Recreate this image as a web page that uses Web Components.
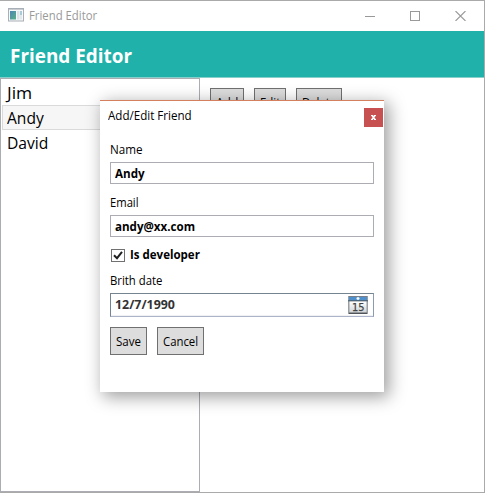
<!DOCTYPE html>
<html lang="en">
<head>
<meta charset="utf-8">
<title>Friend Editor</title>
<style>
html,body{margin:0;padding:0;width:485px;height:493px;overflow:hidden;background:#fff}
body{font:12px/16px "Open Sans","Noto Sans",sans-serif;color:#000}
</style>
</head>
<body>
<friend-app></friend-app>
<script>
function define(name, html, setup) {
  const t = document.createElement('template');
  t.innerHTML = html;
  customElements.define(name, class extends HTMLElement {
    connectedCallback() {
      if (this.shadowRoot) return;
      const root = this.attachShadow({mode: 'open'});
      root.append(t.content.cloneNode(true));
      if (setup) setup(this, root);
    }
  });
}

/* Text condensed or widened to a given advance width. */
define('fit-text', `<style>
:host{display:block;white-space:nowrap;flex:none}
span{display:inline-block;transform-origin:0 50%;vertical-align:top}
</style><span><slot></slot></span>`, (host, root) => {
  const w = +host.getAttribute('w');
  const span = root.querySelector('span');
  host.style.width = w + 'px';
  span.style.transform = 'scaleX(' + w / span.offsetWidth + ')';
});

define('window-titlebar', `<style>
:host{display:flex;align-items:center;height:30px;padding-left:8px;box-sizing:border-box;color:#999}
fit-text{margin-left:5px}
svg{display:block}
.app{margin-top:-2px}
.controls{margin-left:auto;margin-right:18px;margin-top:-1px;display:flex;gap:35px}
</style>
<svg class="app" width="16" height="14" viewBox="0 0 16 14"><defs><linearGradient id="g" x2="1" y2="1"><stop offset="0" stop-color="#4f86b5"/><stop offset="1" stop-color="#5bb086"/></linearGradient></defs>
<rect x=".5" y=".5" width="15" height="12.5" fill="#f7f8fa" stroke="#a9afb6"/><path d="M1 1.5h14" stroke="#c9cdd2"/><rect x="2" y="3" width="6" height="8.5" fill="url(#g)"/><rect x="9" y="3" width="2.5" height="8.5" fill="#dfe3e8"/><rect x="12" y="3" width="2" height="4" fill="#a8cbd8"/><rect x="12" y="7" width="2" height="4.5" fill="#e3e8ec"/></svg>
<fit-text w="68">Friend Editor</fit-text>
<div class="controls">
<svg width="10" height="10"><path d="M0 5.5h10" stroke="#999"/></svg>
<svg width="10" height="10"><rect x=".5" y=".5" width="9" height="9" fill="none" stroke="#999"/></svg>
<svg width="11" height="10"><path d="M.5 0l10 10M10.500 0l-10 10" stroke="#999" stroke-width="1.1"/></svg>
</div>`);

define('app-banner', `<style>
:host{display:block;height:47px;box-sizing:border-box;background:#20b2aa;border-bottom:1px solid #86cfca;padding:11px 0 0 10px;color:#fff;font-size:20px;font-weight:700;line-height:27px}
</style><fit-text w="122"><slot></slot></fit-text>`);

define('list-row', `<style>
:host{display:block;height:25px;box-sizing:border-box;border:1px solid transparent;padding:1px 0 0 4px;font-size:16px;line-height:22px}
:host([selected]){background:#f6f6f6;border-color:#dadada}
</style><slot></slot>`);

define('friend-list', `<style>
:host{display:block;width:200px;height:414px;box-sizing:border-box;border:1px solid #abadb3;padding:1px;flex:none}
</style><slot></slot>`);

define('ui-button', `<style>
:host{display:block;box-sizing:border-box;height:28px;background:#ddd;border:1px solid #707070;padding:6px 5px 0;flex:none}
</style><slot></slot>`);

define('text-field', `<style>
:host{display:flex;box-sizing:border-box;height:22px;border:1px solid #abadb3;padding:3px 4px 0;font-weight:700;background:#fff}
:host([date]){height:24px;padding-top:3px;padding-right:5px;color:#333;border-color:#748491 #8d9bae #abb4ca #748491;box-shadow:inset 0 -1px #f1f1f3}
</style><slot></slot>`);

define('calendar-icon', `<style>:host{display:block;margin-left:auto;margin-top:-1px}svg{display:block}text{font:10.500px "DejaVu Sans",sans-serif;fill:#444}</style>
<svg width="20" height="18" viewBox="0 0 20 18"><defs><linearGradient id="p" x2="0" y2="1"><stop offset="0" stop-color="#fff"/><stop offset="1" stop-color="#cfd4d7"/></linearGradient></defs>
<rect width="20" height="18" fill="#9a9ea2"/><rect x="1" y="0" width="18" height="1" fill="#78818a"/><rect x="1" y="1" width="18" height="4" fill="#4f8fcb"/><rect y="4.300" width="20" height="1" fill="#4c5964"/><rect x="1.500" y="5.500" width="17" height="11" fill="url(#p)"/><rect x="1" y="16.700" width="18" height="1.300" fill="#505357"/><path d="M10 1v3M8.500 2.500h3" stroke="#fff" stroke-width="1.300"/>
<text x="4" y="15.200" textLength="12.500" lengthAdjust="spacingAndGlyphs" stroke="#444" stroke-width=".25">15</text></svg>`);

define('check-box', `<style>
:host{display:flex;align-items:center;gap:5px;font-weight:700;padding-left:1px;height:16px}
svg{display:block;flex:none}
</style><svg width="14" height="13"><rect x=".5" y=".5" width="13" height="12" fill="#fff" stroke="#707070"/><path d="M3 6.200l3 3L11 2.800" fill="none" stroke="#212121" stroke-width="2"/></svg><slot></slot>`);

define('close-button', `<style>
:host{display:block;width:19px;height:19px;background:#c75050}
svg{display:block}
</style><svg width="19" height="19"><path d="M7 7.500h2.300M10 7.500h2M7 11.500h2M10 11.500h2" stroke="#fff"/><path d="M8 7.500l3 4M11 7.500l-3 4" stroke="#fff" stroke-width="1.500"/></svg>`);

define('friend-dialog', `<style>
:host{position:absolute;left:100px;top:99px;width:284px;height:292px;box-sizing:border-box;background:#fff;border-top:1px solid #d4805f;box-shadow:4px 4px 16px 1px rgba(0,0,0,.38)}
header{display:flex;justify-content:space-between;align-items:flex-start;padding:7px 1px 0 8px;height:40px;box-sizing:border-box}
main{padding:1px 10px 0;display:flex;flex-direction:column}
text-field{margin-top:4px}
.l2{margin-top:11px}
check-box{margin-top:10px}
.l3{margin-top:10px}
[date]{margin-top:4px}
.actions{display:flex;gap:10px;margin-top:10px}
</style>
<header><fit-text w="84">Add/Edit Friend</fit-text><close-button></close-button></header>
<main>
<fit-text w="33">Name</fit-text>
<text-field><fit-text w="30">Andy</fit-text></text-field>
<fit-text class="l2" w="29">Email</fit-text>
<text-field><fit-text w="80">andy@xx.com</fit-text></text-field>
<check-box><fit-text w="70">Is developer</fit-text></check-box>
<fit-text class="l3" w="52">Brith date</fit-text>
<text-field date><fit-text w="60">12/7/1990</fit-text><calendar-icon></calendar-icon></text-field>
<div class="actions"><ui-button><fit-text w="25">Save</fit-text></ui-button><ui-button><fit-text w="35">Cancel</fit-text></ui-button></div>
</main>`);

define('friend-app', `<style>
:host{display:block;position:relative;width:485px;height:493px;box-sizing:border-box;border:solid #aaa;border-width:1px 1px 1px 0;background:#fff}
.body{display:flex}
.tools{display:flex;gap:10px;padding:10px 0 0 10px}
</style>
<window-titlebar></window-titlebar>
<app-banner>Friend Editor</app-banner>
<div class="body">
<friend-list>
<list-row><fit-text w="25">Jim</fit-text></list-row>
<list-row selected><fit-text w="37">Andy</fit-text></list-row>
<list-row><fit-text w="41">David</fit-text></list-row>
</friend-list>
<div class="tools"><ui-button><fit-text w="22">Add</fit-text></ui-button><ui-button><fit-text w="20">Edit</fit-text></ui-button><ui-button><fit-text w="34">Delete</fit-text></ui-button></div>
</div>
<friend-dialog></friend-dialog>`);
</script>
</body>
</html>
